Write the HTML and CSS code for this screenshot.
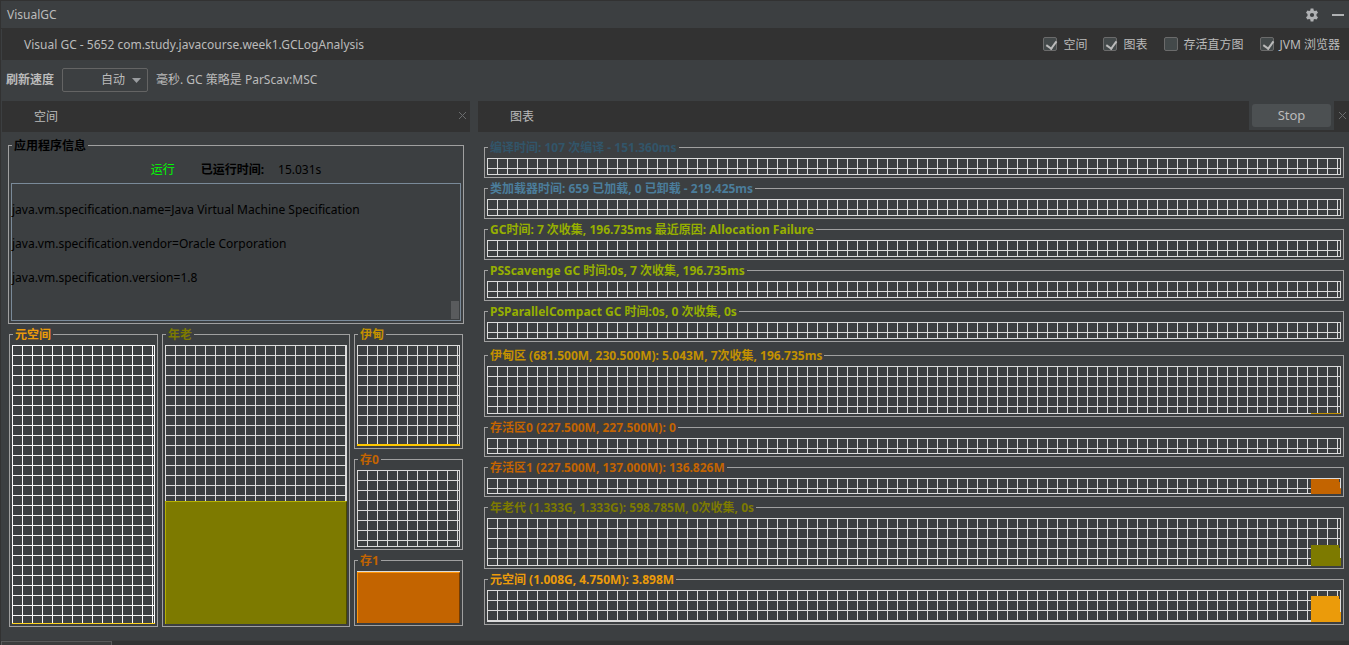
FILE: index.html
```html
<!DOCTYPE html>
<html lang="zh-CN">
<head>
<meta charset="utf-8">
<title>VisualGC</title>
<link rel="stylesheet" href="styles.css">
</head>
<body>
<header class="titlebar">
  <h1 class="title">VisualGC</h1>
  <button class="icon-button" aria-label="设置">
    <svg width="14" height="14" viewBox="0 0 14 14"><path fill="#afb1b3" fill-rule="evenodd" d="M5.600.6h2.800l.3 1.900 1.100.6 1.800-.7 1.400 2.400-1.500 1.200v2l1.500 1.200-1.400 2.400-1.800-.7-1.100.6-.3 1.900H5.600l-.3-1.900-1.100-.6-1.800.7L1 9.200 2.500 8V6L1 4.800l1.400-2.400 1.800.7 1.100-.6zM7 4.900a2.100 2.100 0 1 0 0 4.200 2.100 2.100 0 0 0 0-4.200z"/></svg>
  </button>
  <button class="icon-button" aria-label="最小化">
    <svg width="14" height="14" viewBox="0 0 14 14"><path fill="#afb1b3" d="M1 6h12v2H1z"/></svg>
  </button>
</header>
<div class="appbar">
  <h2 class="app-name">Visual GC - 5652 com.study.javacourse.week1.GCLogAnalysis</h2>
  <label class="toggle"><input type="checkbox" checked>空间</label>
  <label class="toggle"><input type="checkbox" checked>图表</label>
  <label class="toggle"><input type="checkbox">存活直方图</label>
  <label class="toggle"><input type="checkbox" checked>JVM 浏览器</label>
</div>
<div class="options">
  <label class="rate-label" for="rate">刷新速度</label>
  <span class="combo"><select id="rate"><option>自动</option></select><svg class="combo-arrow" width="9" height="6" viewBox="0 0 9 6"><path fill="#9a9da0" d="M0 0h9L4.500 5z"/></svg></span>
  <span>毫秒. GC 策略是 ParScav:MSC</span>
</div>
<main class="panels">
  <section class="panel spaces">
    <div class="tabbar">
      <h3 class="tab-name">空间</h3>
      <button class="close" aria-label="关闭空间"><svg width="9" height="9" viewBox="0 0 9 9"><path stroke="#6b6d6e" d="M1 1l7 7M8 1l-7 7"/></svg></button>
    </div>
    <div class="spaces-body">
      <fieldset class="frame info">
        <legend>应用程序信息</legend>
        <p class="status"><span class="running">运行</span><b>已运行时间:</b><span>15.031s</span></p>
        <div class="properties">
          <p>java.vm.specification.name=Java Virtual Machine Specification</p>
          <p>java.vm.specification.vendor=Oracle Corporation</p>
          <p>java.vm.specification.version=1.8</p>
          <span class="thumb"></span>
        </div>
      </fieldset>
      <div class="generations">
        <fieldset class="frame meta"><legend>元空间</legend><div class="grid bright"><div class="level" style="height:1px"></div></div></fieldset>
        <fieldset class="frame old"><legend>年老</legend><div class="grid"><div class="level raised" style="height:44%"></div></div></fieldset>
        <div class="young">
          <fieldset class="frame eden"><legend>伊甸</legend><div class="grid"><div class="level" style="height:2px"></div></div></fieldset>
          <fieldset class="frame survivor"><legend>存0</legend><div class="grid"></div></fieldset>
          <fieldset class="frame survivor last"><legend>存1</legend><div class="grid"><div class="level raised" style="height:98%"></div></div></fieldset>
        </div>
      </div>
    </div>
  </section>
  <section class="panel charts">
    <div class="tabbar">
      <h3 class="tab-name">图表</h3>
      <span class="stop-slot"><button class="stop">Stop</button></span>
      <button class="close" aria-label="关闭图表"><svg width="9" height="9" viewBox="0 0 9 9"><path stroke="#6b6d6e" d="M1 1l7 7M8 1l-7 7"/></svg></button>
    </div>
    <div class="charts-body">
      <div class="chart-group">
        <fieldset class="frame compile"><legend>编译时间: 107 次编译 - 151.360ms</legend><div class="grid time"></div></fieldset>
        <fieldset class="frame loader"><legend>类加载器时间: 659 已加载, 0 已卸载 - 219.425ms</legend><div class="grid time"></div></fieldset>
        <fieldset class="frame gc"><legend>GC时间: 7 次收集, 196.735ms 最近原因: Allocation Failure</legend><div class="grid time"></div></fieldset>
        <fieldset class="frame gc"><legend>PSScavenge GC 时间:0s, 7 次收集, 196.735ms</legend><div class="grid time"></div></fieldset>
        <fieldset class="frame gc"><legend>PSParallelCompact GC 时间:0s, 0 次收集, 0s</legend><div class="grid time"></div></fieldset>
      </div>
      <div class="chart-group">
        <fieldset class="frame eden"><legend>伊甸区 (681.500M, 230.500M): 5.043M, 7次收集, 196.735ms</legend><div class="grid tall"><div class="history" style="height:1px"></div></div></fieldset>
        <fieldset class="frame survivor"><legend>存活区0 (227.500M, 227.500M): 0</legend><div class="grid short"></div></fieldset>
        <fieldset class="frame survivor"><legend>存活区1 (227.500M, 137.000M): 136.826M</legend><div class="grid short"><div class="history stepped" style="height:15px"></div></div></fieldset>
        <fieldset class="frame old"><legend>年老代 (1.333G, 1.333G): 598.785M, 0次收集, 0s</legend><div class="grid tall"><div class="history stepped" style="height:21px"></div></div></fieldset>
        <fieldset class="frame meta"><legend>元空间 (1.008G, 4.750M): 3.898M</legend><div class="grid medium"><div class="history stepped" style="height:26px"></div></div></fieldset>
      </div>
    </div>
  </section>
</main>
<footer class="bottombar"><span class="bottom-tab"></span></footer>
</body>
</html>
```
FILE: styles.css
```css
* { box-sizing: border-box; margin: 0; padding: 0; }
html, body { height: 100%; }
body {
  display: flex;
  flex-direction: column;
  overflow: hidden;
  background: #3c3f41;
  border-top: 1px solid #323232;
  border-left: 1px solid #323232;
  color: #bbbbbb;
  font: 12px/17px "Noto Sans", "Noto Sans CJK SC", sans-serif;
}
h1, h2, h3 { font-size: 12px; font-weight: 400; }
button { background: none; border: 0; color: inherit; font: inherit; }
svg { display: block; }

.titlebar {
  display: flex;
  align-items: center;
  gap: 12px;
  height: 28px;
  padding: 0 4px 0 6px;
  border-bottom: 1px solid #323232;
}
.title { flex: 1; }

.appbar {
  display: flex;
  align-items: center;
  height: 31px;
  margin-left: 1px;
  padding: 0 9px 0 22px;
  background: #323232;
  gap: 16px;
}
.app-name { flex: 1; }
.toggle { display: flex; align-items: center; gap: 6px; }
.toggle input {
  appearance: none;
  position: relative;
  width: 14px;
  height: 14px;
  margin-bottom: 1px;
  border: 1px solid #6b6b6b;
  border-radius: 2px;
  background: #43494a;
}
.toggle input:checked::after {
  content: "";
  position: absolute;
  left: 4px;
  top: 1px;
  width: 5px;
  height: 8px;
  border: solid #bbbbbb;
  border-width: 0 2px 2px 0;
  transform: rotate(36deg);
}

.options {
  display: flex;
  align-items: center;
  gap: 8px;
  height: 41px;
  padding: 0 0 2px 5px;
}
.rate-label { font-weight: 600; }
.combo { position: relative; }
.combo select {
  display: block;
  appearance: none;
  width: 86px;
  height: 24px;
  padding-left: 38px;
  border: 1px solid #646464;
  border-radius: 2px;
  background: #3c3f41;
  color: inherit;
  font: inherit;
}
.combo-arrow { position: absolute; right: 7px; top: 10px; pointer-events: none; }

.panels { flex: 1; display: flex; gap: 8px; padding-left: 1px; min-height: 0; }
.panel { display: flex; flex-direction: column; min-width: 0; }
.spaces { flex: 468; }
.charts { flex: 871; }
.tabbar {
  display: flex;
  align-items: center;
  height: 31px;
  padding-left: 32px;
  background: #323232;
}
.tab-name { flex: 1; }
.close { padding: 0 3px 2px 4px; }
.stop-slot { align-self: flex-start; padding: 3px; background: #3c3f41; }
.charts .close { padding: 0 2px 2px 4px; }
.stop {
  display: block;
  width: 79px;
  height: 23px;
  border-radius: 3px;
  background: #4c5052;
  font-size: 13px;
}

.frame {
  min-width: 0;
  padding: 2px;
  border: 1px solid #a0a0a0;
  display: flex;
  flex-direction: column;
}
.frame legend {
  margin-left: 1px;
  padding: 0 2px;
  color: var(--hue);
  font-weight: 700;
  white-space: nowrap;
}
.meta { --hue: #eb9b0a; --light: #ffd21e; --dark: #8c5c05; }
.old { --hue: #7d7a00; --light: #b4b000; --dark: #4b4900; }
.eden { --hue: #c39100; --light: #ffc800; --dark: #755700; }
.survivor { --hue: #c36400; --light: #ff960a; --dark: #753c00; }
.compile { --hue: #325569; }
.loader { --hue: #4b7d9b; }
.gc { --hue: #96af00; }

.grid {
  --line: #dcdcdc;
  flex: 1;
  display: flex;
  flex-direction: column;
  justify-content: flex-end;
  background:
    linear-gradient(var(--line), var(--line)) right / 1px 100% no-repeat,
    linear-gradient(var(--line), var(--line)) bottom / 100% 1px no-repeat,
    linear-gradient(to right, var(--line) 1px, transparent 1px) 0 0 / 10px 10px,
    linear-gradient(var(--line) 1px, transparent 1px) 0 0 / 10px 10px;
}
.bright { --line: #fafafa; }
.time { min-height: 17px; }
.short { min-height: 16px; }
.medium { min-height: 32px; }
.tall { min-height: 48px; }
.level { background: var(--light); }
.raised {
  background: var(--hue);
  border: 1px solid var(--light);
  border-right-color: var(--dark);
  border-bottom: 0;
}
.history { align-self: flex-end; width: 30px; background: var(--hue); }
.stepped {
  clip-path: polygon(0 0, 28px 0, 28px 3px, 29px 3px, 29px 62%, 100% 62%, 100% 100%, 0 100%);
}

.spaces-body { flex: 1; display: flex; flex-direction: column; gap: 2px; padding: 5px 6px 13px 6px; }
.info { --hue: #000000; color: #000000; }
.status { display: flex; justify-content: center; gap: 14px; padding: 5px 0; }
.status b { margin-left: 12px; }
.running { color: #00ff00; }
.properties {
  position: relative;
  display: flex;
  flex-direction: column;
  gap: 17px;
  height: 138px;
  padding-top: 17px;
  border: 1px solid #7a8a99;
}
.thumb { position: absolute; right: 1px; bottom: 1px; width: 8px; height: 18px; background: #595b5d; }
.generations {
  flex: 1;
  display: grid;
  grid-template-columns: 149fr 188fr 109fr;
  gap: 4px;
  padding: 0 1px;
}
.young { display: flex; flex-direction: column; gap: 2px; padding-bottom: 1px; }
/* flex-basis 0 still includes each frame's own border and padding */
.young .frame { flex: 93; }
.young .eden { flex: 117; }
.young .last { flex: 68; }

.charts-body { display: flex; flex-direction: column; gap: 5px; padding: 7px 5px 0 6px; }
.chart-group { display: flex; flex-direction: column; gap: 2px; }

.bottombar { display: flex; height: 5px; background: #323232; border-top: 1px solid #3a3a3a; }
.bottom-tab { width: 111px; border: 1px solid #5a5a5a; border-bottom: 0; background: #3c3c3c; }
```
